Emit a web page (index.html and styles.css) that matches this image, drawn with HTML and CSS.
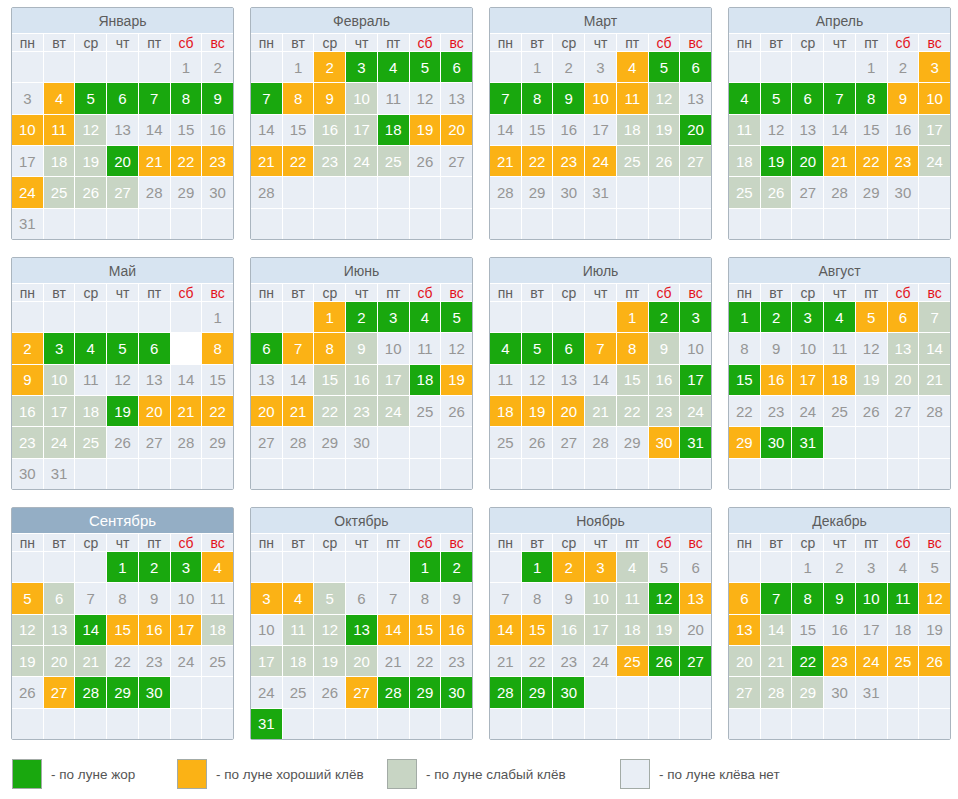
FILE: index.html
```html
<!DOCTYPE html>
<html lang="ru">
<head>
<meta charset="utf-8">
<title>Календарь клёва</title>
<link rel="stylesheet" href="styles.css">
</head>
<body>
<div class="page">
<div class="year">

<div class="month">
<div class="title">Январь</div>
<div class="dn">пн</div><div class="dn">вт</div><div class="dn">ср</div><div class="dn">чт</div><div class="dn">пт</div><div class="dn we">сб</div><div class="dn we">вс</div>
<span></span><span></span><span></span><span></span><span></span><span>1</span><span>2</span>
<span>3</span><span class="o">4</span><span class="g">5</span><span class="g">6</span><span class="g">7</span><span class="g">8</span><span class="g">9</span>
<span class="o">10</span><span class="o">11</span><span class="s">12</span><span>13</span><span>14</span><span>15</span><span>16</span>
<span>17</span><span class="s">18</span><span class="s">19</span><span class="g">20</span><span class="o">21</span><span class="o">22</span><span class="o">23</span>
<span class="o">24</span><span class="s">25</span><span class="s">26</span><span class="s">27</span><span>28</span><span>29</span><span>30</span>
<span>31</span><span></span><span></span><span></span><span></span><span></span><span></span>
</div>

<div class="month">
<div class="title">Февраль</div>
<div class="dn">пн</div><div class="dn">вт</div><div class="dn">ср</div><div class="dn">чт</div><div class="dn">пт</div><div class="dn we">сб</div><div class="dn we">вс</div>
<span></span><span>1</span><span class="o">2</span><span class="g">3</span><span class="g">4</span><span class="g">5</span><span class="g">6</span>
<span class="g">7</span><span class="o">8</span><span class="o">9</span><span class="s">10</span><span>11</span><span>12</span><span>13</span>
<span>14</span><span>15</span><span class="s">16</span><span class="s">17</span><span class="g">18</span><span class="o">19</span><span class="o">20</span>
<span class="o">21</span><span class="o">22</span><span class="s">23</span><span class="s">24</span><span class="s">25</span><span>26</span><span>27</span>
<span>28</span><span></span><span></span><span></span><span></span><span></span><span></span>
<span></span><span></span><span></span><span></span><span></span><span></span><span></span>
</div>

<div class="month">
<div class="title">Март</div>
<div class="dn">пн</div><div class="dn">вт</div><div class="dn">ср</div><div class="dn">чт</div><div class="dn">пт</div><div class="dn we">сб</div><div class="dn we">вс</div>
<span></span><span>1</span><span>2</span><span>3</span><span class="o">4</span><span class="g">5</span><span class="g">6</span>
<span class="g">7</span><span class="g">8</span><span class="g">9</span><span class="o">10</span><span class="o">11</span><span class="s">12</span><span>13</span>
<span>14</span><span>15</span><span>16</span><span>17</span><span class="s">18</span><span class="s">19</span><span class="g">20</span>
<span class="o">21</span><span class="o">22</span><span class="o">23</span><span class="o">24</span><span class="s">25</span><span class="s">26</span><span class="s">27</span>
<span>28</span><span>29</span><span>30</span><span>31</span><span></span><span></span><span></span>
<span></span><span></span><span></span><span></span><span></span><span></span><span></span>
</div>

<div class="month">
<div class="title">Апрель</div>
<div class="dn">пн</div><div class="dn">вт</div><div class="dn">ср</div><div class="dn">чт</div><div class="dn">пт</div><div class="dn we">сб</div><div class="dn we">вс</div>
<span></span><span></span><span></span><span></span><span>1</span><span>2</span><span class="o">3</span>
<span class="g">4</span><span class="g">5</span><span class="g">6</span><span class="g">7</span><span class="g">8</span><span class="o">9</span><span class="o">10</span>
<span class="s">11</span><span>12</span><span>13</span><span>14</span><span>15</span><span>16</span><span class="s">17</span>
<span class="s">18</span><span class="g">19</span><span class="g">20</span><span class="o">21</span><span class="o">22</span><span class="o">23</span><span class="s">24</span>
<span class="s">25</span><span class="s">26</span><span>27</span><span>28</span><span>29</span><span>30</span><span></span>
<span></span><span></span><span></span><span></span><span></span><span></span><span></span>
</div>

<div class="month">
<div class="title">Май</div>
<div class="dn">пн</div><div class="dn">вт</div><div class="dn">ср</div><div class="dn">чт</div><div class="dn">пт</div><div class="dn we">сб</div><div class="dn we">вс</div>
<span></span><span></span><span></span><span></span><span></span><span></span><span>1</span>
<span class="o">2</span><span class="g">3</span><span class="g">4</span><span class="g">5</span><span class="g">6</span><span class="w">7</span><span class="o">8</span>
<span class="o">9</span><span class="s">10</span><span>11</span><span>12</span><span>13</span><span>14</span><span>15</span>
<span class="s">16</span><span class="s">17</span><span class="s">18</span><span class="g">19</span><span class="o">20</span><span class="o">21</span><span class="o">22</span>
<span class="s">23</span><span class="s">24</span><span class="s">25</span><span>26</span><span>27</span><span>28</span><span>29</span>
<span>30</span><span>31</span><span></span><span></span><span></span><span></span><span></span>
</div>

<div class="month">
<div class="title">Июнь</div>
<div class="dn">пн</div><div class="dn">вт</div><div class="dn">ср</div><div class="dn">чт</div><div class="dn">пт</div><div class="dn we">сб</div><div class="dn we">вс</div>
<span></span><span></span><span class="o">1</span><span class="g">2</span><span class="g">3</span><span class="g">4</span><span class="g">5</span>
<span class="g">6</span><span class="o">7</span><span class="o">8</span><span class="s">9</span><span>10</span><span>11</span><span>12</span>
<span>13</span><span>14</span><span class="s">15</span><span class="s">16</span><span class="s">17</span><span class="g">18</span><span class="o">19</span>
<span class="o">20</span><span class="o">21</span><span class="s">22</span><span class="s">23</span><span class="s">24</span><span>25</span><span>26</span>
<span>27</span><span>28</span><span>29</span><span>30</span><span></span><span></span><span></span>
<span></span><span></span><span></span><span></span><span></span><span></span><span></span>
</div>

<div class="month">
<div class="title">Июль</div>
<div class="dn">пн</div><div class="dn">вт</div><div class="dn">ср</div><div class="dn">чт</div><div class="dn">пт</div><div class="dn we">сб</div><div class="dn we">вс</div>
<span></span><span></span><span></span><span></span><span class="o">1</span><span class="g">2</span><span class="g">3</span>
<span class="g">4</span><span class="g">5</span><span class="g">6</span><span class="o">7</span><span class="o">8</span><span class="s">9</span><span>10</span>
<span>11</span><span>12</span><span>13</span><span>14</span><span class="s">15</span><span class="s">16</span><span class="g">17</span>
<span class="o">18</span><span class="o">19</span><span class="o">20</span><span class="s">21</span><span class="s">22</span><span class="s">23</span><span class="s">24</span>
<span>25</span><span>26</span><span>27</span><span>28</span><span>29</span><span class="o">30</span><span class="g">31</span>
<span></span><span></span><span></span><span></span><span></span><span></span><span></span>
</div>

<div class="month">
<div class="title">Август</div>
<div class="dn">пн</div><div class="dn">вт</div><div class="dn">ср</div><div class="dn">чт</div><div class="dn">пт</div><div class="dn we">сб</div><div class="dn we">вс</div>
<span class="g">1</span><span class="g">2</span><span class="g">3</span><span class="g">4</span><span class="o">5</span><span class="o">6</span><span class="s">7</span>
<span>8</span><span>9</span><span>10</span><span>11</span><span>12</span><span class="s">13</span><span class="s">14</span>
<span class="g">15</span><span class="o">16</span><span class="o">17</span><span class="o">18</span><span class="s">19</span><span class="s">20</span><span class="s">21</span>
<span>22</span><span>23</span><span>24</span><span>25</span><span>26</span><span>27</span><span>28</span>
<span class="o">29</span><span class="g">30</span><span class="g">31</span><span></span><span></span><span></span><span></span>
<span></span><span></span><span></span><span></span><span></span><span></span><span></span>
</div>

<div class="month">
<div class="title current">Сентябрь</div>
<div class="dn">пн</div><div class="dn">вт</div><div class="dn">ср</div><div class="dn">чт</div><div class="dn">пт</div><div class="dn we">сб</div><div class="dn we">вс</div>
<span></span><span></span><span></span><span class="g">1</span><span class="g">2</span><span class="g">3</span><span class="o">4</span>
<span class="o">5</span><span class="s">6</span><span>7</span><span>8</span><span>9</span><span>10</span><span>11</span>
<span class="s">12</span><span class="s">13</span><span class="g">14</span><span class="o">15</span><span class="o">16</span><span class="o">17</span><span class="s">18</span>
<span class="s">19</span><span class="s">20</span><span class="s">21</span><span>22</span><span>23</span><span>24</span><span>25</span>
<span>26</span><span class="o">27</span><span class="g">28</span><span class="g">29</span><span class="g">30</span><span></span><span></span>
<span></span><span></span><span></span><span></span><span></span><span></span><span></span>
</div>

<div class="month">
<div class="title">Октябрь</div>
<div class="dn">пн</div><div class="dn">вт</div><div class="dn">ср</div><div class="dn">чт</div><div class="dn">пт</div><div class="dn we">сб</div><div class="dn we">вс</div>
<span></span><span></span><span></span><span></span><span></span><span class="g">1</span><span class="g">2</span>
<span class="o">3</span><span class="o">4</span><span class="s">5</span><span>6</span><span>7</span><span>8</span><span>9</span>
<span>10</span><span class="s">11</span><span class="s">12</span><span class="g">13</span><span class="o">14</span><span class="o">15</span><span class="o">16</span>
<span class="s">17</span><span class="s">18</span><span class="s">19</span><span class="s">20</span><span>21</span><span>22</span><span>23</span>
<span>24</span><span>25</span><span>26</span><span class="o">27</span><span class="g">28</span><span class="g">29</span><span class="g">30</span>
<span class="g">31</span><span></span><span></span><span></span><span></span><span></span><span></span>
</div>

<div class="month">
<div class="title">Ноябрь</div>
<div class="dn">пн</div><div class="dn">вт</div><div class="dn">ср</div><div class="dn">чт</div><div class="dn">пт</div><div class="dn we">сб</div><div class="dn we">вс</div>
<span></span><span class="g">1</span><span class="o">2</span><span class="o">3</span><span class="s">4</span><span>5</span><span>6</span>
<span>7</span><span>8</span><span>9</span><span class="s">10</span><span class="s">11</span><span class="g">12</span><span class="o">13</span>
<span class="o">14</span><span class="o">15</span><span class="s">16</span><span class="s">17</span><span class="s">18</span><span class="s">19</span><span>20</span>
<span>21</span><span>22</span><span>23</span><span>24</span><span class="o">25</span><span class="g">26</span><span class="g">27</span>
<span class="g">28</span><span class="g">29</span><span class="g">30</span><span></span><span></span><span></span><span></span>
<span></span><span></span><span></span><span></span><span></span><span></span><span></span>
</div>

<div class="month">
<div class="title">Декабрь</div>
<div class="dn">пн</div><div class="dn">вт</div><div class="dn">ср</div><div class="dn">чт</div><div class="dn">пт</div><div class="dn we">сб</div><div class="dn we">вс</div>
<span></span><span></span><span>1</span><span>2</span><span>3</span><span>4</span><span>5</span>
<span class="o">6</span><span class="g">7</span><span class="g">8</span><span class="g">9</span><span class="g">10</span><span class="g">11</span><span class="o">12</span>
<span class="o">13</span><span class="s">14</span><span>15</span><span>16</span><span>17</span><span>18</span><span>19</span>
<span class="s">20</span><span class="s">21</span><span class="g">22</span><span class="o">23</span><span class="o">24</span><span class="o">25</span><span class="o">26</span>
<span class="s">27</span><span class="s">28</span><span class="s">29</span><span>30</span><span>31</span><span></span><span></span>
<span></span><span></span><span></span><span></span><span></span><span></span><span></span>
</div>

</div>

<div class="legend">
<div class="item"><div class="box g"></div>- по луне жор</div>
<div class="item"><div class="box o"></div>- по луне хороший клёв</div>
<div class="item"><div class="box s"></div>- по луне слабый клёв</div>
<div class="item"><div class="box e"></div>- по луне клёва нет</div>
</div>
</div>
</body>
</html>
```

FILE: styles.css
```css
body {
  margin: 0;
  background: #fff;
  font-family: "Liberation Sans", Arial, sans-serif;
}

.page {
  padding: 7px 0 0 11px;
}

.year {
  display: grid;
  grid-template-columns: repeat(4, 223px);
  column-gap: 16px;
  row-gap: 17px;
}

.month {
  box-sizing: border-box;
  height: 233px;
  border: 1px solid #aab5bf;
  border-radius: 2px;
  background: #fff;
  display: grid;
  grid-template-columns: repeat(7, 1fr);
  grid-template-rows: 25px 17px repeat(6, 1fr);
  gap: 1px;
}

.title {
  grid-column: 1 / -1;
  background: #d7e4f1;
  color: #5c5c5c;
  font-size: 14px;
  display: flex;
  align-items: center;
  justify-content: center;
}

.title.current {
  background: #94aec5;
  color: #fff;
  font-size: 15px;
}

.dn {
  background: #e9eef5;
  color: #606060;
  font-size: 14px;
  display: flex;
  align-items: center;
  justify-content: center;
}

.dn.we {
  color: #e3131b;
}

.month span {
  background: #e9eef5;
  color: #969696;
  font-size: 15px;
  display: flex;
  align-items: center;
  justify-content: center;
}

.month span.g { background: #19a80e; color: #fff; }
.month span.o { background: #fbb215; color: #fff; }
.month span.s { background: #c8d5c4; color: #fff; }
.month span.w { background: #fff; color: #fff; }

.legend {
  display: grid;
  grid-template-columns: 165px 210px 233px auto;
  margin-top: 19px;
  padding-left: 1px;
}

.item {
  display: flex;
  align-items: center;
  gap: 9px;
  font-size: 13.5px;
  color: #555;
}

.box {
  box-sizing: border-box;
  width: 30px;
  height: 30px;
  border: 1px solid #a3aba6;
}

.box.g { background: #19a80e; }
.box.o { background: #fbb215; }
.box.s { background: #c8d5c4; }
.box.e { background: #e9eef5; }
```
